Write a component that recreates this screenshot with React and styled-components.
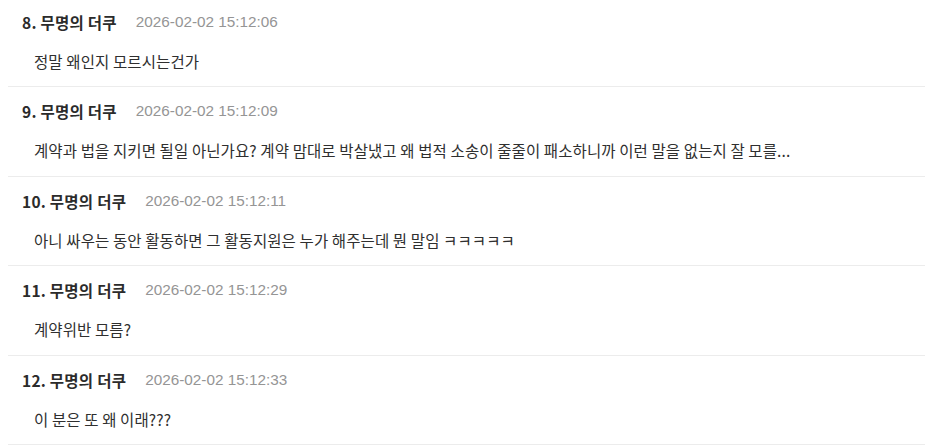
import React from "react";
import styled, { createGlobalStyle } from "styled-components";

const Global = createGlobalStyle`
  html, body { margin: 0; padding: 0; background: #fff; }
  body {
    font-family: "Noto Sans CJK KR", "Noto Sans", "Liberation Sans", sans-serif;
    -webkit-font-smoothing: antialiased;
  }
`;

const List = styled.ul`
  list-style: none;
  margin: -2.5px 0 0 8px;
  padding: 0;
`;

const Row = styled.li`
  padding: 13px 14px 14.5px;
  border-bottom: 1px solid #ececec;
`;

const Header = styled.div`
  display: flex;
  align-items: center;
  gap: 19px;
  height: 22px;
`;

const Name = styled.span`
  font-size: 15.5px;
  font-weight: 700;
  color: #2b2b2b;
  letter-spacing: 0.25px;
`;

const DateText = styled.span`
  font-family: "Liberation Sans", "Noto Sans CJK KR", sans-serif;
  font-size: 15.3px;
  color: #959595;
`;

const Body = styled.p`
  margin: 17px 0 0 12px;
  font-size: 15.5px;
  line-height: 22px;
  color: #2f2f2f;
  letter-spacing: 0.1px;
  white-space: nowrap;
`;

const comments = [
  { n: 8, t: "2026-02-02 15:12:06", b: "정말 왜인지 모르시는건가" },
  { n: 9, t: "2026-02-02 15:12:09", b: "계약과 법을 지키면 될일 아닌가요? 계약 맘대로 박살냈고 왜 법적 소송이 줄줄이 패소하니까 이런 말을 없는지 잘 모를..." },
  { n: 10, t: "2026-02-02 15:12:11", b: "아니 싸우는 동안 활동하면 그 활동지원은 누가 해주는데 뭔 말임 ㅋㅋㅋㅋㅋ" },
  { n: 11, t: "2026-02-02 15:12:29", b: "계약위반 모름?" },
  { n: 12, t: "2026-02-02 15:12:33", b: "이 분은 또 왜 이래???" },
];

export default function App() {
  return (
    <>
      <Global />
      <List>
        {comments.map((c) => (
          <Row key={c.n}>
            <Header>
              <Name>{c.n}. 무명의 더쿠</Name>
              <DateText>{c.t}</DateText>
            </Header>
            <Body>{c.b}</Body>
          </Row>
        ))}
      </List>
    </>
  );
}
